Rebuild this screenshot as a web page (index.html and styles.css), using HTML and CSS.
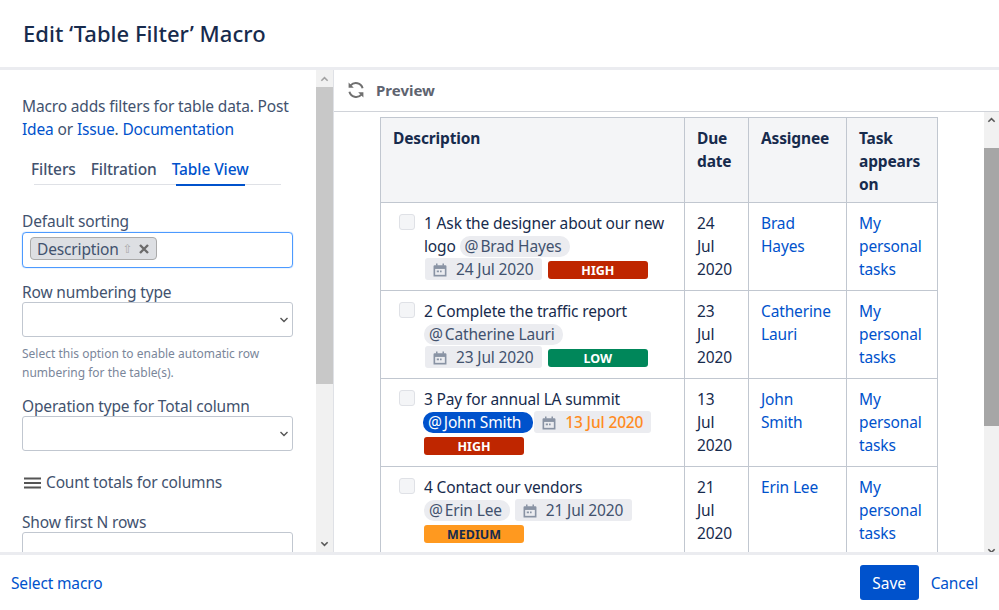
FILE: index.html
```html
<!DOCTYPE html>
<html lang="en">
<head>
<meta charset="utf-8">
<title>Edit Table Filter Macro</title>
<link rel="stylesheet" href="styles.css">
</head>
<body>
<div class="dialog">
  <header class="head"><h1>Edit ‘Table Filter’ Macro</h1></header>
  <main class="main">
    <aside class="side">
      <div class="form">
        <p class="intro">Macro adds filters for table data. Post <a href="#">Idea</a> or <a href="#">Issue</a>. <a href="#">Documentation</a></p>
        <nav class="tabs">
          <span class="tab">Filters</span><span class="tab">Filtration</span><span class="tab tab-on">Table View</span>
        </nav>
        <label class="label first">Default sorting</label>
        <div class="multi"><span class="sortchip">Description <span class="arrow">⇧</span><svg class="x" viewBox="0 0 12 12"><path d="M2 2l8 8M10 2l-8 8"/></svg></span></div>
        <label class="label">Row numbering type</label>
        <div class="select"><svg class="chev" viewBox="0 0 10 6"><path d="M1.5 1l3.5 3.5L8.5 1"/></svg></div>
        <p class="help">Select this option to enable automatic row numbering for the table(s).</p>
        <label class="label op">Operation type for Total column</label>
        <div class="select"><svg class="chev" viewBox="0 0 10 6"><path d="M1.5 1l3.5 3.5L8.5 1"/></svg></div>
        <div class="count"><svg class="menu" viewBox="0 0 17 12"><path d="M0 1.5h17M0 6h17M0 10.5h17"/></svg>Count totals for columns</div>
        <label class="label shown">Show first N rows</label>
        <div class="select"></div>
      </div>
      <div class="sbar sbar-left">
        <div class="sbtn up-faint"><svg viewBox="0 0 10 6"><path d="M1.5 5L5 1.5 8.5 5"/></svg></div>
        <div class="thumb thumb-left"></div>
        <div class="strack"></div>
        <div class="sbtn"><svg viewBox="0 0 10 6"><path d="M1.5 1L5 4.5 8.5 1"/></svg></div>
      </div>
    </aside>
    <section class="preview">
      <div class="phead">
        <svg class="sync" viewBox="0 0 18 18"><path d="M15.6 7.2A7 7 0 0 0 3.6 4.4"/><path d="M2.400 10.800a7 7 0 0 0 12 2.800"/><path class="fill" d="M1.600 1.600l5.200 5.200H1.600zM16.400 16.400l-5.200-5.200h5.200z"/></svg>
        <span>Preview</span>
      </div>
      <div class="pbody">
        <div class="pscroll">
          <table class="grid">
            <colgroup><col class="c1"><col class="c2"><col class="c3"><col class="c4"></colgroup>
            <thead><tr><th>Description</th><th>Due date</th><th>Assignee</th><th>Task appears on</th></tr></thead>
            <tbody>
              <tr>
                <td><div class="task"><span class="box"></span><div class="tt">1 Ask the designer about our new logo <span class="mention"><span class="at">@</span>Brad Hayes</span> <span class="date"><svg class="cal" viewBox="0.5 0.5 13 13"><path d="M1 3.5a1 1 0 0 1 1-1h10a1 1 0 0 1 1 1V13H1z"/><path class="cut" d="M2.500 6h9v5.500h-9z"/><path class="dots" d="M4 7.500h2v1.500H4zM7 7.500h1.500v1.500H7z"/><path d="M4 1v2M10 1v2"/></svg>24 Jul 2020</span> <span class="loz high">HIGH</span></div></div></td>
                <td class="due">24 Jul 2020</td><td><a href="#">Brad Hayes</a></td><td><a href="#">My personal tasks</a></td>
              </tr>
              <tr>
                <td><div class="task"><span class="box"></span><div class="tt">2 Complete the traffic report <span class="mention"><span class="at">@</span>Catherine Lauri</span> <span class="date"><svg class="cal" viewBox="0.5 0.5 13 13"><path d="M1 3.5a1 1 0 0 1 1-1h10a1 1 0 0 1 1 1V13H1z"/><path class="cut" d="M2.500 6h9v5.500h-9z"/><path class="dots" d="M4 7.500h2v1.500H4zM7 7.500h1.500v1.500H7z"/><path d="M4 1v2M10 1v2"/></svg>23 Jul 2020</span> <span class="loz ok">LOW</span></div></div></td>
                <td class="due">23 Jul 2020</td><td><a href="#">Catherine Lauri</a></td><td><a href="#">My personal tasks</a></td>
              </tr>
              <tr>
                <td><div class="task"><span class="box"></span><div class="tt">3 Pay for annual LA summit <span class="mention me"><span class="at">@</span>John Smith</span><span class="date late"><svg class="cal" viewBox="0.5 0.5 13 13"><path d="M1 3.5a1 1 0 0 1 1-1h10a1 1 0 0 1 1 1V13H1z"/><path class="cut" d="M2.500 6h9v5.500h-9z"/><path class="dots" d="M4 7.500h2v1.500H4zM7 7.500h1.500v1.500H7z"/><path d="M4 1v2M10 1v2"/></svg>13 Jul 2020</span> <span class="loz high">HIGH</span></div></div></td>
                <td class="due">13 Jul 2020</td><td><a href="#">John Smith</a></td><td><a href="#">My personal tasks</a></td>
              </tr>
              <tr>
                <td><div class="task"><span class="box"></span><div class="tt">4 Contact our vendors <span class="mention"><span class="at">@</span>Erin Lee</span> <span class="date"><svg class="cal" viewBox="0.5 0.5 13 13"><path d="M1 3.5a1 1 0 0 1 1-1h10a1 1 0 0 1 1 1V13H1z"/><path class="cut" d="M2.500 6h9v5.500h-9z"/><path class="dots" d="M4 7.500h2v1.500H4zM7 7.500h1.500v1.500H7z"/><path d="M4 1v2M10 1v2"/></svg>21 Jul 2020</span> <span class="loz med">MEDIUM</span></div></div></td>
                <td class="due">21 Jul 2020</td><td><a href="#">Erin Lee</a></td><td><a href="#">My personal tasks</a></td>
              </tr>
            </tbody>
          </table>
        </div>
        <div class="sbar sbar-right">
          <div class="sbtn tall"><svg viewBox="0 0 10 6"><path d="M1.500 5L5 1.500 8.500 5"/></svg></div>
          <div class="thumb thumb-right"></div>
          <div class="strack"></div>
          <div class="sbtn cutoff"><svg viewBox="0 0 10 6"><path d="M1.500 1L5 4.500 8.500 1"/></svg></div>
        </div>
      </div>
    </section>
  </main>
  <footer class="foot">
    <a href="#" class="selmacro">Select macro</a>
    <div class="actions"><button class="save">Save</button><a href="#">Cancel</a></div>
  </footer>
</div>
</body>
</html>
```
FILE: styles.css
```css
* { box-sizing: border-box; }
html, body { margin: 0; height: 100%; }
body { font-family: "Noto Sans", "Open Sans", sans-serif; font-size: 15.5px; letter-spacing: -0.15px; color: #172b4d; background: #fff; overflow: hidden; }
a { color: #0052cc; text-decoration: none; }
.dialog { width: 999px; height: 610px; display: flex; flex-direction: column; }
.head { height: 70px; border-bottom: 3px solid #ebecf0; padding: 0 23px 2px; display: flex; align-items: center; flex: none; }
.head h1 { margin: 0; font-size: 22px; font-weight: 500; color: #172b4d; line-height: 28px; letter-spacing: 0.02px; }
.main { flex: 1; min-height: 0; display: flex; }
.side { width: 334px; flex: none; display: flex; border-right: 1px solid #dfe1e6; }
.form { width: 316px; flex: none; overflow: hidden; padding: 25px 23px 0 22px; color: #42526e; }
.intro { margin: 0; line-height: 23px; color: #42526e; }
.tabs { margin: 17px 12px 0 12px; height: 27px; border-bottom: 1px solid #dfe1e6; display: flex; gap: 15px; }
.tab { font-weight: 500; line-height: 23px; color: #42526e; letter-spacing: -0.1px; }
.tabs .tab:first-child { margin-left: -3px; }
.tab-on { color: #0052cc; }
.tab-on::after { content: ""; height: 2px; background: #0052cc; display: block; margin: 3px 4px 0; }
.label { display: block; line-height: 25px; margin-bottom: -2px; color: #42526e; }
.first { margin-top: 24px; }
.multi { height: 36px; border: 1px solid #4c9aff; border-radius: 4px; box-shadow: 0 0 1px #4c9aff; padding: 4px 7px; }
.sortchip { display: inline-flex; align-items: center; height: 23px; padding: 0 6px; background: #dddfe3; border: 1px solid #aaa; border-radius: 4px; white-space: nowrap; }
.arrow { color: #aaa; font-size: 12px; margin: 0 5px 0 4px; font-family: "DejaVu Sans", sans-serif; }
.x { width: 12px; height: 12px; fill: none; stroke: #6b6b6b; stroke-width: 2.4; }
.select { height: 35px; border: 1px solid #c1c7d0; border-radius: 3px; margin-top: -3px; display: flex; align-items: center; justify-content: flex-end; padding-right: 3px; }
.chev { width: 10px; height: 6px; fill: none; stroke: #555; stroke-width: 1.4; }
.multi + .label { margin-top: 12px; }
.help { margin: 7px 0 -1px; font-size: 12px; line-height: 19px; color: #7a869a; letter-spacing: 0; }
.op { margin-top: 13px; }
.count { display: flex; align-items: center; gap: 5px; margin-top: 20px; line-height: 23px; color: #42526e; }
.menu { width: 17px; height: 12px; fill: none; stroke: #555; stroke-width: 2; margin-left: 2px; }
.shown { margin-top: 16px; }
.sbar { width: 17px; flex: none; background: #f1f1f1; display: flex; flex-direction: column; }
.sbtn { height: 17px; display: flex; align-items: center; justify-content: center; flex: none; }
.sbtn svg { width: 9px; height: 6px; fill: none; stroke: #5a5a5a; stroke-width: 1.8; }
.up-faint svg { stroke: #a3a3a3; }
.thumb { flex: none; }
.thumb-left { height: 297px; background: #c8c8c8; }
.strack { flex: 1; }
.preview { flex: 1; min-width: 0; display: flex; flex-direction: column; }
.phead { height: 42px; flex: none; border-bottom: 1px solid #d0d3d9; display: flex; align-items: center; padding: 0 0 1px 13px; gap: 11px; font-weight: 700; font-size: 15px; letter-spacing: 0; color: #5e6470; }
.sync { width: 18px; height: 18px; fill: none; stroke: #707070; stroke-width: 2; }
.sync .fill { fill: #707070; stroke: none; }
.pbody { flex: 1; min-height: 0; display: flex; }
.pscroll { flex: 1; min-width: 0; overflow: hidden; padding: 5px 0 0 46px; }
.grid { border-collapse: collapse; table-layout: fixed; width: 557px; }
.c1 { width: 304px; } .c2 { width: 64px; } .c3 { width: 98px; } .c4 { width: 91px; }
.grid th, .grid td { border: 1px solid #c1c7d0; padding: 9px 12px; text-align: left; vertical-align: top; line-height: 23px; }
.grid th { background: #f4f5f7; font-weight: 700; padding-bottom: 6px; color: #172b4d; }
.grid td { height: 88px; color: #172b4d; }
.grid td.due { padding-right: 20px; }
.task { display: flex; margin-left: 6px; }
.box { width: 16px; height: 16px; flex: none; border: 1px solid #dfe1e6; background: #f4f5f7; border-radius: 3px; margin: 2px 9px 0 0; }
.tt { min-width: 0; flex: 1; padding-right: 5px; }
.mention { display: inline-block; vertical-align: top; height: 21px; line-height: 21px; margin-top: 1px; padding: 0 8px 0 5px; background: #ebecf0; border-radius: 10px; color: #42526e; white-space: nowrap; }
.at { margin-right: 2px; }
.me { background: #0052cc; color: #fff; margin-left: -1px; padding-right: 12px; }
.date { display: inline-block; vertical-align: top; width: 117px; height: 22px; line-height: 22px; padding: 0 0 0 8px; margin: 0 2px 0 1px; background: #ebecf0; border-radius: 3px; color: #42526e; white-space: nowrap; }
.late { color: #ff8b1f; font-weight: 500; }
.cal { width: 14px; height: 14px; vertical-align: -2px; margin-right: 9px; fill: #8993a4; }
.cal .cut { fill: #ebecf0; }
.cal .dots { fill: #8993a4; }
.cal path:last-child { fill: none; stroke: #8993a4; stroke-width: 1.4; }
.loz { display: inline-block; vertical-align: top; width: 100px; height: 18px; margin-top: 3px; border-radius: 3px; color: #fff; text-align: center; font-size: 12.5px; font-weight: 700; line-height: 19px; letter-spacing: 0; }
.high { background: #bf2600; }
.ok { background: #00875a; }
.med { background: #ff991f; color: #172b4d; }
.sbar-right { width: 15px; }
.tall { height: 36px; align-items: flex-start; padding-top: 5px; }
.thumb-right { height: 278px; background: #a6a6a6; }
.cutoff { height: 4px; align-items: flex-start; overflow: hidden; }
.foot { height: 58px; flex: none; border-top: 3px solid #ebecf0; display: flex; align-items: center; justify-content: space-between; padding: 0 21px 0 11px; }
.actions { display: flex; align-items: center; gap: 12px; }
.save { width: 59px; height: 35px; border: 0; border-radius: 3px; background: #0052cc; color: #fff; font: inherit; line-height: 37px; padding: 0; }
```
